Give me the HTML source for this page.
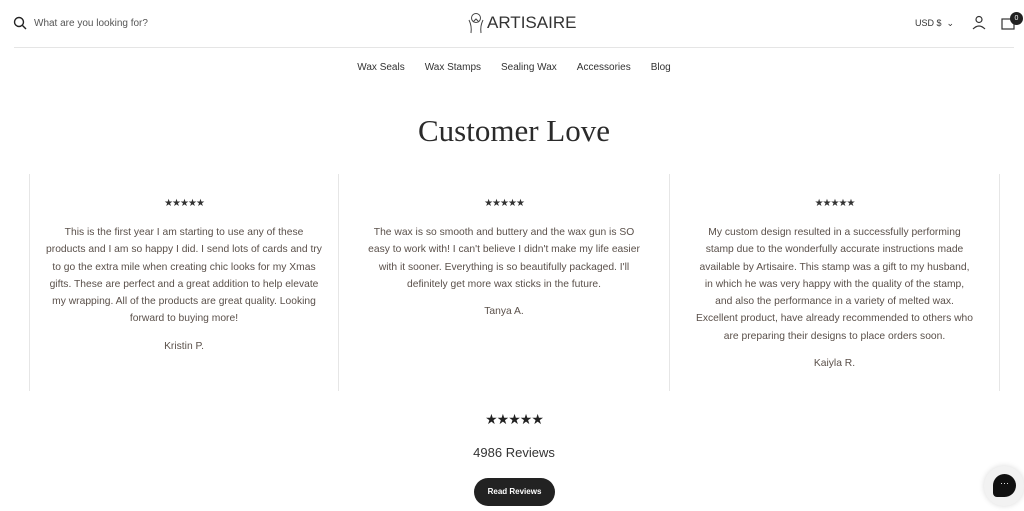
<!DOCTYPE html>
<html><head><meta charset="utf-8"><style>
*{margin:0;padding:0;box-sizing:border-box}
body{width:1024px;height:511px;overflow:hidden;background:#fff;font-family:"Liberation Sans",sans-serif;color:#222;position:relative}
.a{position:absolute}
.nav a{font-size:10px;color:#333;margin:0 10px;text-decoration:none}
.card{position:absolute;top:174px;height:217px;text-align:center;border-left:1px solid #e6e6e6}
.card .st{font-size:10px;letter-spacing:-1px;color:#333;margin-top:24px;line-height:12px}
.card p{font-size:10.3px;line-height:17.3px;color:#5a504a;margin-top:14px;white-space:nowrap}
.card p.n{margin-top:10px}
</style></head><body>
<svg class="a" style="left:13px;top:16px" width="14" height="14" viewBox="0 0 14 14"><circle cx="6" cy="6" r="4.5" fill="none" stroke="#222" stroke-width="1.4"/><path d="M9.5 9.5L13 13" stroke="#222" stroke-width="1.4"/></svg>
<div class="a" style="left:34px;top:18px;font-size:10px;color:#555">What are you looking for?</div>
<svg class="a" style="left:467px;top:12px" width="18" height="22" viewBox="0 0 18 22"><circle cx="9" cy="6" r="4.5" fill="none" stroke="#444"/><path d="M2 8 Q5 14 4 21 M16 8 Q13 14 14 21 M6 10 L9 7 L12 10" fill="none" stroke="#444"/></svg>
<div class="a" style="left:487px;top:13px;font-size:17px;color:#333">ARTISAIRE</div>
<div class="a" style="left:915px;top:18px;font-size:9px;color:#333">USD $ &nbsp;⌄</div>
<svg class="a" style="left:972px;top:15px" width="14" height="15" viewBox="0 0 14 15"><circle cx="7" cy="4.5" r="3" fill="none" stroke="#333" stroke-width="1.2"/><path d="M1 14 Q7 8 13 14" fill="none" stroke="#333" stroke-width="1.2"/></svg>
<svg class="a" style="left:1001px;top:16px" width="14" height="14" viewBox="0 0 14 14"><rect x="1" y="3" width="12" height="10" fill="none" stroke="#333" stroke-width="1.2"/></svg>
<div class="a" style="left:1010px;top:12px;width:13px;height:13px;border-radius:50%;background:#222;color:#fff;font-size:7px;text-align:center;line-height:13px">0</div>
<div class="a" style="left:14px;top:47px;width:1000px;height:1px;background:#e5e5e5"></div>
<div class="a nav" style="left:0;width:1028px;top:57px;text-align:center"><a>Wax Seals</a><a>Wax Stamps</a><a>Sealing Wax</a><a>Accessories</a><a>Blog</a></div>
<div class="a" style="left:0;width:1028px;top:113px;text-align:center;font-family:'Liberation Serif',serif;font-size:31px;color:#2a2a2a">Customer Love</div>
<div class="card" style="left:29px;width:309px"><div class="st">★★★★★</div><p>This is the first year I am starting to use any of these<br>products and I am so happy I did. I send lots of cards and try<br>to go the extra mile when creating chic looks for my Xmas<br>gifts. These are perfect and a great addition to help elevate<br>my wrapping. All of the products are great quality. Looking<br>forward to buying more!</p><p class="n">Kristin P.</p></div>
<div class="card" style="left:338px;width:331px"><div class="st">★★★★★</div><p>The wax is so smooth and buttery and the wax gun is SO<br>easy to work with! I can't believe I didn't make my life easier<br>with it sooner. Everything is so beautifully packaged. I'll<br>definitely get more wax sticks in the future.</p><p class="n">Tanya A.</p></div>
<div class="card" style="left:669px;width:331px;border-right:1px solid #e6e6e6"><div class="st">★★★★★</div><p>My custom design resulted in a successfully performing<br>stamp due to the wonderfully accurate instructions made<br>available by Artisaire. This stamp was a gift to my husband,<br>in which he was very happy with the quality of the stamp,<br>and also the performance in a variety of melted wax.<br>Excellent product, have already recommended to others who<br>are preparing their designs to place orders soon.</p><p class="n">Kaiyla R.</p></div>
<div class="a" style="left:0;width:1028px;top:411px;text-align:center;font-size:14px;letter-spacing:-1px;color:#222">★★★★★</div>
<div class="a" style="left:0;width:1028px;top:445px;text-align:center;font-size:13px;color:#333">4986 Reviews</div>
<div class="a" style="left:474px;top:478px;width:81px;height:28px;border-radius:14px;background:#222;color:#fff;font-size:8px;text-align:center;line-height:28px;font-weight:bold">Read Reviews</div>
<div class="a" style="left:984px;top:466px;width:40px;height:40px;border-radius:50%;background:#f2f2f2;box-shadow:0 0 6px rgba(0,0,0,.15)"></div>
<div class="a" style="left:993px;top:474px;width:23px;height:23px;border-radius:50% 50% 50% 4px;background:#111;color:#fff;font-size:9px;text-align:center;line-height:18px">···</div>
</body></html>
